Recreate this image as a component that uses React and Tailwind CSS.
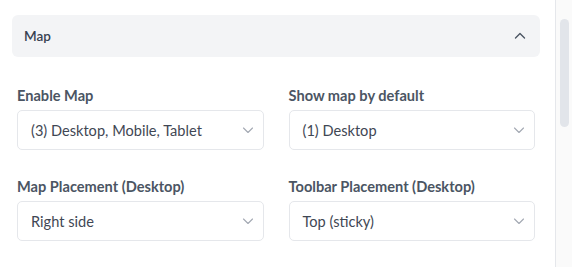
import React from "react";

function Chevron({ up = false, className = "" }) {
  return (
    <svg width="12" height="12" viewBox="0 0 12 12" className={className} fill="none">
      {up ? (
        <path d="M1.5 8 L6 3.5 L10.5 8" stroke="currentColor" strokeWidth="1.4" strokeLinecap="round" strokeLinejoin="round" />
      ) : (
        <path d="M1.5 4 L6 8.5 L10.5 4" stroke="currentColor" strokeWidth="1.1" strokeLinecap="round" strokeLinejoin="round" />
      )}
    </svg>
  );
}

function Field({ label, value }) {
  return (
    <div className="flex flex-col">
      <div className="h-5 leading-5 text-[14.6px] font-bold text-[#4b5563] mb-[4px]">{label}</div>
      <div className="h-10 rounded-[5px] border border-[#e5e7eb] bg-white flex items-center justify-between pl-[13px] pr-[9px]">
        <span className="text-[14.6px] text-[#3f4754] pt-[2px]">{value}</span>
        <Chevron className="text-[#a3a9b3]" />
      </div>
    </div>
  );
}

export default function App() {
  return (
    <div className="w-[572px] h-[267px] bg-white flex overflow-hidden" style={{ fontFamily: '"Lato", "Open Sans", sans-serif' }}>
      <div className="flex-1 pt-[15px] pl-3 pr-[15px]">
        <div className="h-[42px] rounded-[6px] bg-[#f3f4f6] flex items-center justify-between pl-3 pr-[14px]">
          <span className="text-[13.5px] font-semibold text-[#374151]">Map</span>
          <Chevron up className="text-[#4b5563]" />
        </div>
        <div className="px-[5px] pt-[29px] grid grid-cols-2 gap-x-[25px] gap-y-[27px]">
          <Field label="Enable Map" value="(3) Desktop, Mobile, Tablet" />
          <Field label="Show map by default" value="(1) Desktop" />
          <Field label="Map Placement (Desktop)" value="Right side" />
          <Field label="Toolbar Placement (Desktop)" value="Top (sticky)" />
        </div>
      </div>
      <div className="w-[17px] border-l border-[#e5e7eb] bg-[#fafafa] pt-[19px] flex justify-center">
        <div className="w-[9px] h-[108px] rounded-full bg-[#e2e5ea]" />
      </div>
    </div>
  );
}
